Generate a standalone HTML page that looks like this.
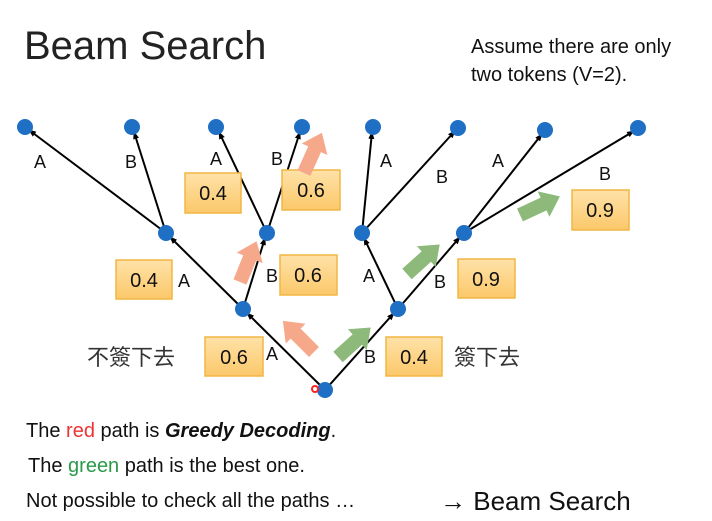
<!DOCTYPE html>
<html><head><meta charset="utf-8"><style>
body{margin:0;width:712px;height:521px;background:#fff;overflow:hidden;position:relative;font-family:"Liberation Sans","Noto Sans CJK TC",sans-serif;color:#111}
.t{position:absolute;white-space:nowrap}
</style></head><body>
<div class="t" style="left:24px;top:24px;font-size:40px;color:#222">Beam Search</div>
<div class="t" style="left:471px;top:33px;font-size:20px;line-height:28px">Assume there are only<br>two tokens (V=2).</div>
<svg width="712" height="521" style="position:absolute;left:0;top:0">
<defs><marker id="ar" markerWidth="8" markerHeight="8" refX="7" refY="4" orient="auto" markerUnits="userSpaceOnUse"><path d="M0,1 L8,4 L0,7z" fill="#000"/></marker>
<linearGradient id="bx" x1="0" y1="0" x2="0" y2="1"><stop offset="0" stop-color="#FEE2A8"/><stop offset="1" stop-color="#FCC86A"/></linearGradient>
<polygon id="ba" points="0,-7 26,-7 26,-14 44,0 26,14 26,7 0,7"/></defs>
<g stroke="#000" stroke-width="2" marker-end="url(#ar)">
<line x1="325" y1="390" x2="247" y2="313"/><line x1="325" y1="390" x2="394" y2="313"/>
<line x1="243" y1="309" x2="170" y2="237"/><line x1="243" y1="309" x2="265" y2="238"/>
<line x1="398" y1="309" x2="364" y2="238"/><line x1="398" y1="309" x2="460" y2="237"/>
<line x1="166" y1="233" x2="29" y2="130"/><line x1="166" y1="233" x2="134" y2="132"/>
<line x1="267" y1="233" x2="219" y2="132"/><line x1="267" y1="233" x2="300" y2="132"/>
<line x1="362" y1="233" x2="372" y2="132"/><line x1="362" y1="233" x2="455" y2="131"/>
<line x1="464" y1="233" x2="542" y2="134"/><line x1="464" y1="233" x2="634" y2="131"/>
</g>
<g fill="#1F6FC5">
<circle cx="325" cy="390" r="8"/><circle cx="243" cy="309" r="8"/><circle cx="398" cy="309" r="8"/>
<circle cx="166" cy="233" r="8"/><circle cx="267" cy="233" r="8"/><circle cx="362" cy="233" r="8"/><circle cx="464" cy="233" r="8"/>
<circle cx="25" cy="127" r="8"/><circle cx="132" cy="127" r="8"/><circle cx="216" cy="127" r="8"/><circle cx="302" cy="127" r="8"/>
<circle cx="373" cy="127" r="8"/><circle cx="458" cy="128" r="8"/><circle cx="545" cy="130" r="8"/><circle cx="638" cy="128" r="8"/>
</g>
<circle cx="315" cy="389" r="3" fill="none" stroke="#f22" stroke-width="2"/>
<g stroke="#F2B544" stroke-width="1.5" fill="url(#bx)">
<rect x="205" y="337" width="58" height="39"/><rect x="386" y="337" width="56" height="39"/>
<rect x="116" y="260" width="56" height="39"/><rect x="280" y="255" width="57" height="40"/>
<rect x="458" y="259" width="57" height="39"/><rect x="185" y="173" width="56" height="40"/>
<rect x="282" y="170" width="58" height="40"/><rect x="572" y="190" width="57" height="40"/>
</g>
<g font-size="20" fill="#111" text-anchor="middle">
<text x="234" y="364">0.6</text><text x="414" y="364">0.4</text><text x="144" y="287">0.4</text>
<text x="308" y="282">0.6</text><text x="486" y="286">0.9</text><text x="213" y="200">0.4</text>
<text x="311" y="197">0.6</text><text x="600" y="217">0.9</text>
</g>
<g font-size="18" fill="#111" text-anchor="middle">
<text x="272" y="360">A</text><text x="370" y="363">B</text><text x="184" y="287">A</text><text x="272" y="282">B</text>
<text x="369" y="282">A</text><text x="440" y="288">B</text>
<text x="40" y="168">A</text><text x="131" y="168">B</text><text x="216" y="165">A</text><text x="277" y="165">B</text>
<text x="386" y="167">A</text><text x="442" y="183">B</text><text x="498" y="167">A</text><text x="605" y="180">B</text>
</g>
<g font-size="22" fill="#333" font-family="Noto Sans CJK TC,sans-serif"><text x="87" y="365">不簽下去</text><text x="454" y="365">簽下去</text></g>
<g fill="#F6A98A">
<use href="#ba" transform="translate(314,352) rotate(-135)"/>
<use href="#ba" transform="translate(240,282) rotate(-68)"/>
<use href="#ba" transform="translate(304,173) rotate(-66)"/>
</g>
<g fill="#8DB97A">
<use href="#ba" transform="translate(338,357) rotate(-42)"/>
<use href="#ba" transform="translate(407,274) rotate(-42)"/>
<use href="#ba" transform="translate(520,215) rotate(-25)"/>
</g>
</svg>
<div class="t" style="left:26px;top:420px;font-size:20px">The <span style="color:#e33">red</span> path is <b><i>Greedy Decoding</i></b>.</div>
<div class="t" style="left:28px;top:455px;font-size:20px">The <span style="color:#2a9a4a">green</span> path is the best one.</div>
<div class="t" style="left:26px;top:490px;font-size:20px">Not possible to check all the paths …</div>
<div class="t" style="left:440px;top:486px;font-size:26px">→ Beam Search</div>
</body></html>
